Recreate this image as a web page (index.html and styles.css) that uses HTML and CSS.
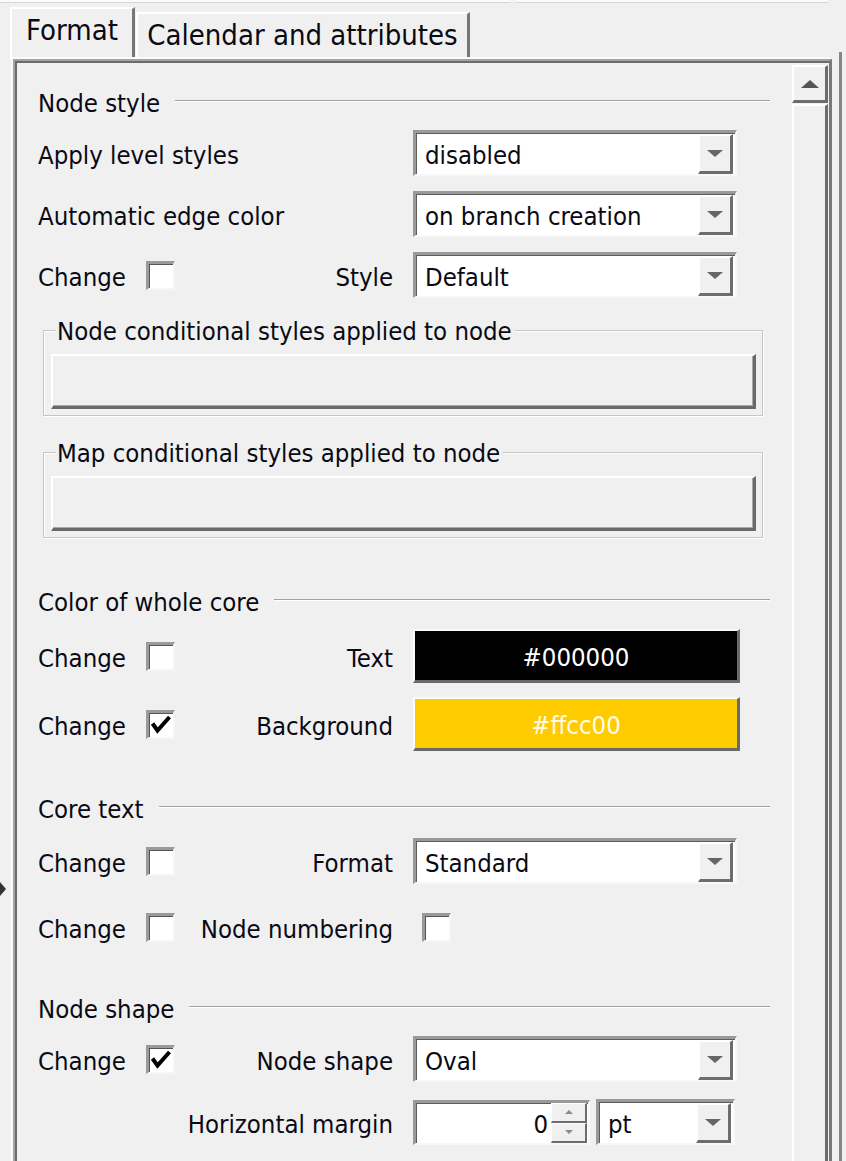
FILE: index.html
```html
<!DOCTYPE html>
<html lang="en">
<head>
<meta charset="utf-8">
<title>Format</title>
<link rel="stylesheet" href="styles.css">
</head>
<body>
<div class="topbar"><span class="seg seg-a"></span><span class="seg seg-b"></span></div>
<div class="window">
  <div class="gutter"><i class="grip"></i></div>
  <div class="main">
    <div class="tabs">
      <div class="tab tab-active">Format</div>
      <div class="tab tab-other">Calendar and attributes</div>
    </div>
    <div class="panelrow">
      <div class="panel">
        <div class="content">
          <div class="head"><span>Node style</span></div>

          <div class="row first">
            <span class="full">Apply level styles</span>
            <div class="ctl"><div class="combo"><span class="val">disabled</span><span class="dd"><i class="tri-down"></i></span></div></div>
          </div>
          <div class="row next">
            <span class="full">Automatic edge color</span>
            <div class="ctl"><div class="combo"><span class="val">on branch creation</span><span class="dd"><i class="tri-down"></i></span></div></div>
          </div>
          <div class="row next">
            <span class="chg">Change</span><span class="cb"></span>
            <span class="lbl">Style</span>
            <div class="ctl"><div class="combo"><span class="val">Default</span><span class="dd"><i class="tri-down"></i></span></div></div>
          </div>

          <fieldset class="group group-1">
            <legend>Node conditional styles applied to node</legend>
            <div class="wide-btn"></div>
          </fieldset>
          <fieldset class="group group-2">
            <legend>Map conditional styles applied to node</legend>
            <div class="wide-btn"></div>
          </fieldset>

          <div class="head head-color"><span>Color of whole core</span></div>
          <div class="row tall first">
            <span class="chg">Change</span><span class="cb"></span>
            <span class="lbl">Text</span>
            <div class="ctl"><div class="colorbtn color-black">#000000</div></div>
          </div>
          <div class="row tall first">
            <span class="chg">Change</span><span class="cb checked"><svg viewBox="0 0 24 24" width="24" height="24"><path d="M3.5 10.5 L8.5 17.5 L20.5 4"/></svg></span>
            <span class="lbl">Background</span>
            <div class="ctl"><div class="colorbtn color-yellow">#ffcc00</div></div>
          </div>

          <div class="head head-core"><span>Core text</span></div>
          <div class="row after-head">
            <span class="chg">Change</span><span class="cb"></span>
            <span class="lbl">Format</span>
            <div class="ctl"><div class="combo"><span class="val">Standard</span><span class="dd"><i class="tri-down"></i></span></div></div>
          </div>
          <div class="row numbering">
            <span class="chg">Change</span><span class="cb"></span>
            <span class="lbl">Node numbering</span>
            <div class="ctl"><span class="cb cb-offset"></span></div>
          </div>

          <div class="head head-shape"><span>Node shape</span></div>
          <div class="row first">
            <span class="chg">Change</span><span class="cb checked"><svg viewBox="0 0 24 24" width="24" height="24"><path d="M3.5 10.5 L8.5 17.5 L20.5 4"/></svg></span>
            <span class="lbl">Node shape</span>
            <div class="ctl"><div class="combo"><span class="val">Oval</span><span class="dd"><i class="tri-down"></i></span></div></div>
          </div>
          <div class="row margin-row">
            <span class="lbl">Horizontal margin</span>
            <div class="ctl">
              <div class="spin">
                <span class="num">0</span>
                <span class="arrows"><span class="sbtn"><i class="tri-up-s"></i></span><span class="sbtn"><i class="tri-down-s"></i></span></span>
              </div>
              <div class="combo combo-unit"><span class="val">pt</span><span class="dd"><i class="tri-down"></i></span></div>
            </div>
          </div>
        </div>
        <div class="scroll">
          <div class="upbtn"><i class="tri-up"></i></div>
          <div class="thumb"></div>
        </div>
      </div>
      <div class="outer-line"></div>
    </div>
  </div>
</div>
</body>
</html>
```
FILE: styles.css
```css
* { box-sizing: border-box; }

html, body {
  margin: 0;
  padding: 0;
}

body {
  width: 846px;
  height: 1161px;
  overflow: hidden;
  background: #f0f0f0;
  color: #0a0a14;
  font-family: "DejaVu Sans Condensed", "DejaVu Sans", sans-serif;
  font-stretch: condensed;
  font-size: 25.5px;
}

.topbar {
  display: flex;
  gap: 4px;
  height: 3px;
}
.seg {
  background: #fbfbfb;
  border-bottom: 1px solid #d6d6d6;
}
.seg-a { width: 511px; }
.seg-b { width: 313px; }

.window { display: flex; }

.gutter {
  width: 13px;
  flex: none;
}
.grip {
  display: block;
  width: 0;
  height: 0;
  margin-top: 879px;
  border-top: 7px solid transparent;
  border-bottom: 7px solid transparent;
  border-left: 6px solid #333;
}

.main {
  flex: 1;
  display: flex;
  flex-direction: column;
}

/* Tabs */
.tabs {
  display: flex;
  align-items: flex-end;
  height: 56px;
  padding-top: 4px;
  margin-left: -3px;
}
.tab {
  display: flex;
  justify-content: center;
  font-size: 29px;
  line-height: 34px;
  padding-top: 4px;
  border-top: 2px solid #fff;
  border-left: 2px solid #fff;
  border-right: 3px solid #777;
  white-space: nowrap;
}
.tab-active {
  width: 125px;
  height: 52px;
}
.tab-other {
  width: 334px;
  height: 47px;
  margin-left: 1px;
}

/* Panel */
.panelrow { display: flex; }

.panel {
  width: 819px;
  height: 1110px;
  display: flex;
  border-top: 2px solid #a4a4a4;
  border-left: 2px solid #a4a4a4;
  border-right: 3px solid #7a7a7a;
  box-shadow: inset 2px 2px 0 #6c6c6c, -2px -2px 0 #fbfbfb;
}

.outer-line {
  width: 3px;
  margin-left: 7px;
  margin-top: -7px;
  background: #858585;
}

.content {
  flex: 1;
  padding: 25px 20px 0 23px;
  line-height: 30px;
}

/* Section headers */
.head {
  display: flex;
  align-items: center;
  gap: 15px;
  height: 30px;
  white-space: nowrap;
}
.head span { padding-top: 4px; }
.head::after {
  content: "";
  flex: 1;
  border-top: 1px solid #a0a0a0;
  border-bottom: 1px solid #fff;
}
.head-color { margin-top: 47px; }
.head-core { margin-top: 41px; }
.head-shape { margin-top: 42px; }

/* Rows */
.row {
  display: grid;
  grid-template-columns: 108px 29px 1fr 327px;
  align-items: center;
  width: 702px;
  height: 46px;
  white-space: nowrap;
}
.row.tall { height: 54px; }
.row.first { margin-top: 14px; }
.row.next { margin-top: 15px; }
.row.after-head { margin-top: 16px; }
.row.numbering { margin-top: 20px; }
.row.margin-row { margin-top: 17px; }

.full { grid-column: 1 / 4; padding-top: 4px; }
.chg { grid-column: 1; padding-top: 4px; }
.lbl {
  grid-column: 3;
  text-align: right;
  padding: 4px 20px 0 0;
}
.ctl {
  grid-column: 4;
  display: flex;
  align-items: center;
  gap: 6px;
}

/* Checkbox */
.cb {
  display: block;
  width: 29px;
  height: 29px;
  background: #fff;
  border-style: solid;
  border-width: 3px 2px 2px 3px;
  border-color: #9a9a9a #f6f6f6 #f6f6f6 #9a9a9a;
  box-shadow: inset 1px 1px 0 #555;
}
.cb svg { display: block; }
.cb path {
  fill: none;
  stroke: #000;
  stroke-width: 4;
}
.cb-offset { margin-left: 9px; }

/* Combo box */
.combo {
  display: flex;
  align-items: stretch;
  width: 324px;
  height: 46px;
  background: #fff;
  border-style: solid;
  border-width: 3px 2px 2px 3px;
  border-color: #999 #f8f8f8 #f8f8f8 #999;
  box-shadow: inset 1px 1px 0 #5c5c5c;
}
.combo .val {
  flex: 1;
  padding: 2px 0 0 9px;
  display: flex;
  align-items: center;
}
.dd {
  width: 35px;
  margin: 1px 2px 0 0;
  display: flex;
  align-items: center;
  justify-content: center;
  background: #f0f0f0;
  border-style: solid;
  border-width: 2px 3px 3px 2px;
  border-color: #fff #6d6d6d #6d6d6d #fff;
}
.tri-down {
  width: 0;
  height: 0;
  border-left: 8px solid transparent;
  border-right: 8px solid transparent;
  border-top: 7px solid #666;
}
.combo-unit {
  width: 139px;
}

/* Group boxes */
.group {
  margin: 19px 0 0 5px;
  width: 720px;
  padding: 11px 6px 6px 7px;
  border: 1px solid #c6c6c6;
  box-shadow: inset 1px 1px 0 #fff, 1px 1px 0 #fff;
}
.group-2 { margin-top: 23px; }
.group legend {
  margin-left: 5px;
  padding: 2px 3px 0 1px;
  line-height: 24px;
  background: #f0f0f0;
  white-space: nowrap;
}
.wide-btn {
  height: 55px;
  background: #f0f0f0;
  border-style: solid;
  border-width: 2px 3px 3px 2px;
  border-color: #fff #6a6a6a #6a6a6a #fff;
  box-shadow: inset -1px -1px 0 #a8a8a8;
}

/* Color buttons */
.colorbtn {
  width: 327px;
  height: 54px;
  display: flex;
  align-items: center;
  justify-content: center;
  padding-top: 2px;
  color: #fff;
  border-style: solid;
  border-width: 2px 3px 3px 2px;
  border-color: #fafafa #6a6a6a #6a6a6a #fafafa;
}
.color-black { background: #000; }
.color-yellow { background: #ffcc00; color: #fffbe8; }

/* Spinner */
.spin {
  display: flex;
  width: 177px;
  height: 45px;
  background: #fff;
  border-style: solid;
  border-width: 3px 2px 2px 3px;
  border-color: #999 #f8f8f8 #f8f8f8 #999;
  box-shadow: inset 1px 1px 0 #5c5c5c;
}
.spin .num {
  flex: 1;
  padding: 2px 3px 0 0;
  display: flex;
  align-items: center;
  justify-content: flex-end;
}
.arrows {
  width: 36px;
  display: flex;
  flex-direction: column;
  margin-right: 1px;
}
.sbtn {
  flex: 1;
  display: flex;
  align-items: center;
  justify-content: center;
  background: #f0f0f0;
  border-style: solid;
  border-width: 1px 2px 2px 1px;
  border-color: #fff #6d6d6d #6d6d6d #fff;
}
.tri-up-s {
  width: 0;
  height: 0;
  border-left: 4px solid transparent;
  border-right: 4px solid transparent;
  border-bottom: 4px solid #8a8a8a;
}
.tri-down-s {
  width: 0;
  height: 0;
  border-left: 4px solid transparent;
  border-right: 4px solid transparent;
  border-top: 4px solid #8a8a8a;
}

/* Scrollbar */
.scroll {
  width: 39px;
  flex: none;
  display: flex;
  flex-direction: column;
  gap: 1px;
  padding: 4px 1px 0 2px;
}
.upbtn {
  height: 38px;
  display: flex;
  align-items: center;
  justify-content: center;
  background: #f0f0f0;
  border-style: solid;
  border-width: 2px 3px 3px 2px;
  border-color: #fff #6d6d6d #6d6d6d #fff;
}
.tri-up {
  width: 0;
  height: 0;
  border-left: 9px solid transparent;
  border-right: 9px solid transparent;
  border-bottom: 8px solid #555;
}
.thumb {
  flex: 1;
  background: #f0f0f0;
  border-style: solid;
  border-width: 2px 3px 0 2px;
  border-color: #fff #6d6d6d #6d6d6d #fff;
}
```
